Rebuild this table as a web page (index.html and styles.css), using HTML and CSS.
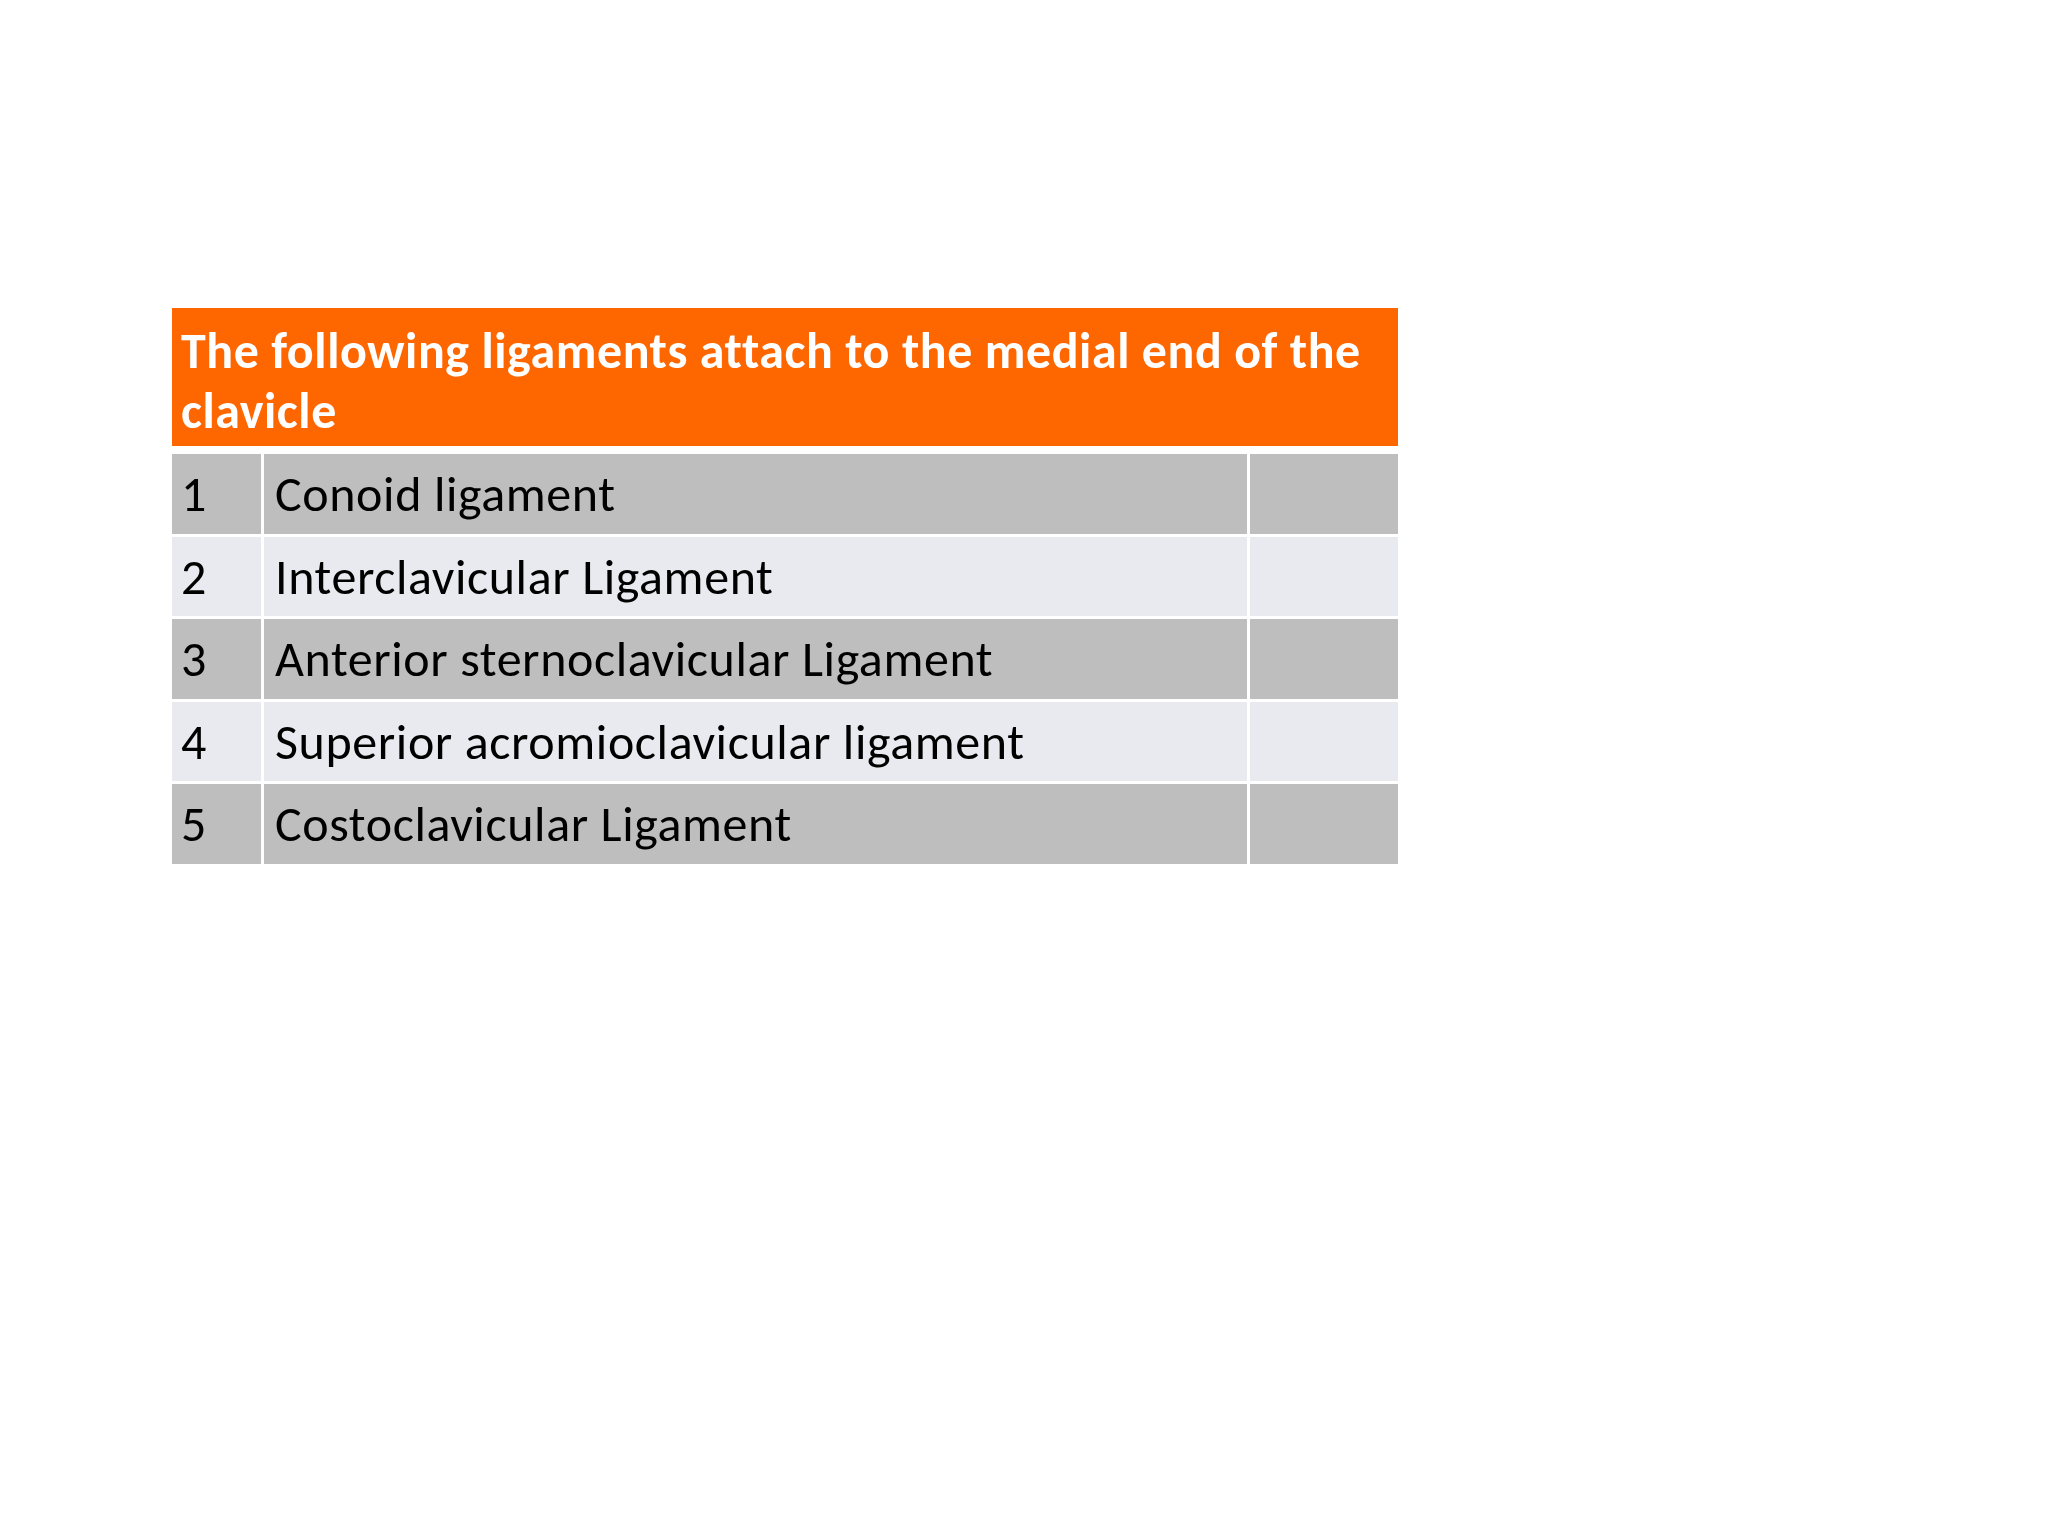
FILE: index.html
```html
<!DOCTYPE html>
<html lang="en">
<head>
<meta charset="utf-8">
<title>Ligaments of the clavicle</title>
<link rel="stylesheet" href="styles.css">
</head>
<body>
<main class="slide">
  <section class="quiz">
    <div class="quiz-head">The following ligaments attach to the medial end of the clavicle</div>
    <div class="quiz-rows">
      <div class="cell num dark">1</div><div class="cell text dark">Conoid ligament</div><div class="cell blank dark"></div>
      <div class="cell num light">2</div><div class="cell text light">Interclavicular Ligament</div><div class="cell blank light"></div>
      <div class="cell num dark">3</div><div class="cell text dark">Anterior sternoclavicular Ligament</div><div class="cell blank dark"></div>
      <div class="cell num light">4</div><div class="cell text light">Superior acromioclavicular ligament</div><div class="cell blank light"></div>
      <div class="cell num dark">5</div><div class="cell text dark">Costoclavicular Ligament</div><div class="cell blank dark"></div>
    </div>
  </section>
</main>
</body>
</html>
```

FILE: styles.css
```css
html, body {
  margin: 0;
  padding: 0;
  background: #ffffff;
}

.slide {
  width: 2048px;
  height: 1536px;
  padding: 308px 0 0 172px;
  box-sizing: border-box;
  font-family: Carlito, Calibri, Lato, "Liberation Sans", sans-serif;
}

.quiz {
  width: 1226px;
  display: flex;
  flex-direction: column;
  gap: 8px;
}

.quiz-head {
  background: #fe6600;
  color: #ffffff;
  font-weight: 700;
  font-size: 50px;
  letter-spacing: 0.55px;
  line-height: 60px;
  height: 138px;
  box-sizing: border-box;
  padding: 13px 10px 0 9px;
}

.quiz-rows {
  display: grid;
  grid-template-columns: 89px 983px 148px;
  grid-template-rows: 80px 79px 80px 79px 80px;
  gap: 3px;
}

.cell {
  display: flex;
  align-items: center;
  font-size: 50px;
  letter-spacing: 0.6px;
  color: #000000;
  box-sizing: border-box;
  padding-bottom: 1px;
}

.num {
  padding-left: 9px;
}

.text {
  padding-left: 11px;
}

.dark {
  background: #bfbebf;
}

.light {
  background: #e9eaef;
}
```
